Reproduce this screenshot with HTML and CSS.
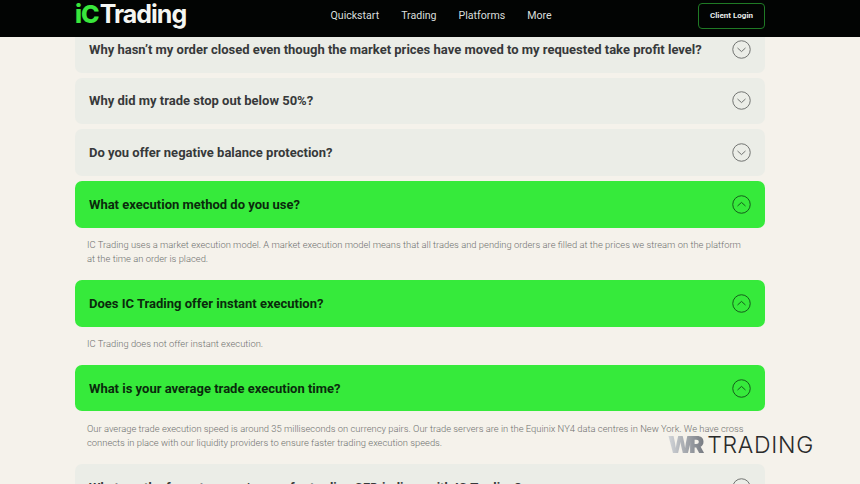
FILE: index.html
```html
<!DOCTYPE html>
<html lang="en">
<head>
<meta charset="utf-8">
<title>IC Trading FAQ</title>
<link rel="stylesheet" href="styles.css">
</head>
<body>
<header class="site-header">
  <div class="logo"><span class="logo-ic">iC</span><span class="logo-rest">Trading</span></div>
  <nav class="nav">
    <a>Quickstart</a>
    <a>Trading</a>
    <a>Platforms</a>
    <a>More</a>
  </nav>
  <a class="login">Client Login</a>
</header>
<main class="faq">
  <div class="q">
    <h3>Why hasn’t my order closed even though the market prices have moved to my requested take profit level?</h3>
    <svg class="chev" viewBox="0 0 20 20"><circle cx="10" cy="10" r="9.2"/><path d="M5.8 8.4 10 12.2l4.2-3.8"/></svg>
  </div>
  <div class="q">
    <h3>Why did my trade stop out below 50%?</h3>
    <svg class="chev" viewBox="0 0 20 20"><circle cx="10" cy="10" r="9.2"/><path d="M5.8 8.4 10 12.2l4.2-3.8"/></svg>
  </div>
  <div class="q">
    <h3>Do you offer negative balance protection?</h3>
    <svg class="chev" viewBox="0 0 20 20"><circle cx="10" cy="10" r="9.2"/><path d="M5.8 8.4 10 12.2l4.2-3.8"/></svg>
  </div>
  <div class="q open">
    <h3>What execution method do you use?</h3>
    <svg class="chev" viewBox="0 0 20 20"><circle cx="10" cy="10" r="9.2"/><path d="M5.8 11.6 10 7.8l4.2 3.8"/></svg>
  </div>
  <p class="a">IC Trading uses a market execution model. A market execution model means that all trades and pending orders are filled at the prices we stream on the platform at the time an order is placed.</p>
  <div class="q open">
    <h3>Does IC Trading offer instant execution?</h3>
    <svg class="chev" viewBox="0 0 20 20"><circle cx="10" cy="10" r="9.2"/><path d="M5.8 11.6 10 7.8l4.2 3.8"/></svg>
  </div>
  <p class="a">IC Trading does not offer instant execution.</p>
  <div class="q open">
    <h3>What is your average trade execution time?</h3>
    <svg class="chev" viewBox="0 0 20 20"><circle cx="10" cy="10" r="9.2"/><path d="M5.8 11.6 10 7.8l4.2 3.8"/></svg>
  </div>
  <p class="a">Our average trade execution speed is around 35 milliseconds on currency pairs. Our trade servers are in the Equinix NY4 data centres in New York. We have cross connects in place with our liquidity providers to ensure faster trading execution speeds.</p>
  <div class="q">
    <h3>What are the forex top-ups/swaps for trading CFD indices with IC Trading?</h3>
    <svg class="chev" viewBox="0 0 20 20"><circle cx="10" cy="10" r="9.2"/><path d="M5.8 8.4 10 12.2l4.2-3.8"/></svg>
  </div>
</main>
<div class="watermark"><span class="wm-wr">WR</span><span class="wm-rest">TRADING</span></div>
</body>
</html>
```
FILE: styles.css
```css
* { box-sizing: border-box; }
html, body { margin: 0; height: 484px; overflow: hidden; }
body { background: #f5f2eb; font-family: Roboto, "Liberation Sans", sans-serif; position: relative; }

.site-header {
  position: absolute; top: 0; left: 0; right: 0; z-index: 2;
  height: 37px; background: #020403;
  display: flex; align-items: center;
  padding: 0 95px 6px 75px;
}
.logo { font-family: Inter, sans-serif; font-weight: 700; font-size: 25px; letter-spacing: -1px; line-height: 28px; width: 255.5px; margin-top: -3px; }
.logo-ic { color: #39e63c; font-weight: 800; margin-right: 1px; }
.logo-rest { color: #f4f6f2; }
.nav { display: flex; gap: 22px; font-size: 10.6px; color: #d9dedb; flex: 1; }
.login {
  width: 67px; height: 26px; border: 1px solid #1f7a25; border-radius: 4px;
  display: flex; align-items: center; justify-content: center;
  font-size: 8px; font-weight: 700; color: #e8ecea;
}

.faq { padding: 26px 95px 0 75px; }
.q {
  height: 46.5px; margin-bottom: 5.2px; border-radius: 7px;
  background: #ebede7;
  display: flex; align-items: center; justify-content: space-between;
  padding: 0 14.5px 0 14px;
}
.q h3 { margin: 0; font-size: 13px; font-weight: 700; color: #37393a; }
.q.open { background: #36ea3b; }
.q.open h3 { color: #0a2a0c; }
.chev { width: 19px; height: 19px; fill: none; stroke: #6b6e6c; stroke-width: 1; flex: none; }
.q.open .chev { stroke: #14551a; }
.a {
  margin: 0; padding: 5px 18px 13.5px 12px;
  font-size: 9.4px; line-height: 14.5px; font-weight: 300; color: #6f716f;
}

.watermark {
  position: absolute; left: 668px; top: 432px; z-index: 3;
  display: flex; align-items: center; height: 26px;
  font-family: Inter, sans-serif; font-size: 23px; color: #2a2b2b;
}
.wm-wr {
  font-weight: 900; letter-spacing: -4px; padding-right: 7px;
  background: linear-gradient(90deg, #d3d6da, #6f737a);
  -webkit-background-clip: text; background-clip: text; color: transparent;
}
.wm-rest { font-weight: 300; letter-spacing: 0.7px; }
```
